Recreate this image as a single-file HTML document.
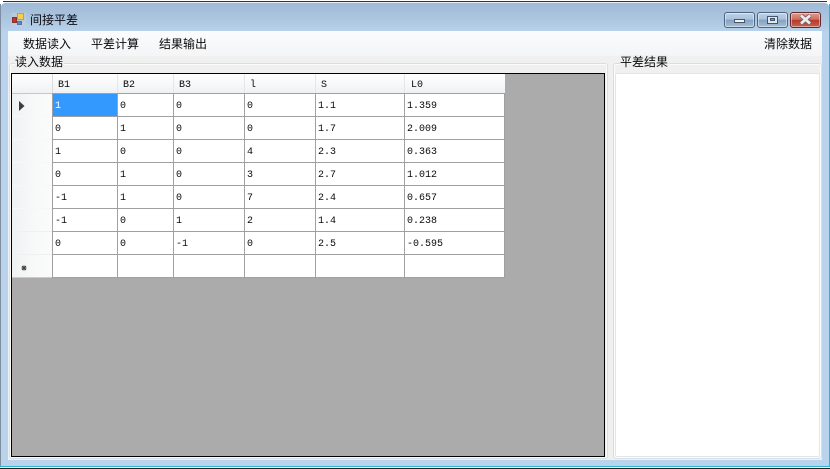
<!DOCTYPE html>
<html>
<head>
<meta charset="utf-8">
<style>
html,body{margin:0;padding:0;width:830px;height:469px;overflow:hidden;background:#fff}
*{box-sizing:border-box}
.a{position:absolute}
#win{position:absolute;left:1px;top:2px;width:828px;height:464px;background:linear-gradient(180deg,#9fbad7 0,#aec7e0 18px,#bad3ec 30px,#bad3ec 100%);border-radius:5px 5px 0 0;border-top:1px solid #e8eef4;}
.cjk{font-family:"Liberation Sans","WenQuanYi Zen Hei","Noto Sans CJK SC",sans-serif;font-size:12px;line-height:14px;color:#0a0a0a;white-space:nowrap}
.m{font-family:"Liberation Mono",monospace;font-size:10px;line-height:12px;color:#0a0a0a;white-space:pre}
.h{position:absolute;background:#a0a0a0}
.btn{position:absolute;top:12px;height:16px;width:31px;border:1px solid #4d6580;border-radius:3px;box-shadow:inset 0 0 0 1px rgba(255,255,255,.45)}
</style>
</head>
<body>
<div class="a" style="left:3px;top:1px;width:824px;height:1px;background:#2c3640"></div>
<div id="win"></div>
<div class="a" style="left:0;top:4px;width:1px;height:462px;background:#7f8f9f"></div>
<div class="a" style="left:829px;top:4px;width:1px;height:462px;background:#2ab8d0"></div>
<div class="a" style="left:0;top:466px;width:830px;height:1px;background:#2ab8d0"></div>
<div class="a" style="left:0;top:468px;width:830px;height:1px;background:#222"></div>

<!-- title icon -->
<svg class="a" style="left:11px;top:12px" width="16" height="16" viewBox="0 0 16 16">
<rect x="0.5" y="0.5" width="15" height="14" fill="#c3cfdb" fill-opacity=".55"/>
<rect x="1.5" y="5.5" width="4" height="5" fill="#c0322a" stroke="#8a3030"/>
<rect x="6.5" y="1.5" width="6" height="6" fill="#f5cf50" stroke="#c0a050"/>
<rect x="6.5" y="9.5" width="4" height="3" fill="#5a88d0" stroke="#5070b0"/>
</svg>
<div class="a cjk" style="left:30px;top:13px;color:#0c0c14">间接平差</div>

<!-- window buttons -->
<div class="btn" style="left:724px;background:linear-gradient(180deg,#bfd2e6 0,#a9c1da 45%,#84a2c2 50%,#a5bfd8 100%)"></div>
<div class="a" style="left:734px;top:19px;width:11px;height:4px;background:#eef2f6;border:1px solid #46566a"></div>
<div class="btn" style="left:757px;background:linear-gradient(180deg,#bfd2e6 0,#a9c1da 45%,#84a2c2 50%,#a5bfd8 100%)"></div>
<div class="a" style="left:767px;top:16px;width:11px;height:8px;background:#dfe7ef;border:1px solid #46566a"></div>
<div class="a" style="left:770px;top:18px;width:5px;height:3px;background:#7f9ab6;border:1px solid #46566a"></div>
<div class="btn" style="left:790px;border-color:#5c2a30;background:linear-gradient(180deg,#dd9a8c 0,#cf6f60 45%,#b53a2a 52%,#c9604e 100%)"></div>
<svg class="a" style="left:798px;top:13px" width="15" height="13" viewBox="0 0 15 13">
<path d="M3 2.5 L12 10.5 M12 2.5 L3 10.5" stroke="#7a5a60" stroke-width="4.4" fill="none"/>
<path d="M3 2.5 L12 10.5 M12 2.5 L3 10.5" stroke="#ececec" stroke-width="2.8" fill="none"/>
</svg>

<!-- client area -->
<div class="a" style="left:8px;top:31px;width:814px;height:429px;background:#f0f0f0"></div>
<div class="a" style="left:8px;top:31px;width:814px;height:25px;background:linear-gradient(180deg,#fbfcfd 0,#f4f5f6 100%)"></div>
<div class="a cjk" style="left:23px;top:37px">数据读入</div>
<div class="a cjk" style="left:91px;top:37px">平差计算</div>
<div class="a cjk" style="left:159px;top:37px">结果输出</div>
<div class="a cjk" style="left:764px;top:37px">清除数据</div>

<!-- group boxes -->
<div class="a" style="left:9px;top:63px;width:599px;height:396px;border:1px solid #d5dfe5;border-radius:3px;box-shadow:inset 0 0 0 1px #fbfcfc"></div>
<div class="a" style="left:613px;top:63px;width:209px;height:396px;border:1px solid #d5dfe5;border-radius:3px;box-shadow:inset 0 0 0 1px #fbfcfc"></div>
<div class="a cjk" style="left:15px;top:55px;background:#f0f0f0;padding-right:1px">读入数据</div>
<div class="a cjk" style="left:620px;top:55px;background:#f0f0f0;padding-right:1px">平差结果</div>

<!-- result textbox -->
<div class="a" style="left:615px;top:73px;width:205px;height:384px;background:#fff;border:1px solid #e2e6ea;border-radius:2px"></div>

<!-- grid -->
<div class="a" style="left:11px;top:73px;width:594px;height:384px;background:#ababab;border:1px solid #000"></div>
<div class="a" style="left:12px;top:74px;width:493px;height:20px;background:linear-gradient(180deg,#ffffff 0,#f7f8f9 50%,#eef0f2 100%)"></div>
<div class="a" style="left:12px;top:94px;width:40px;height:184px;background:linear-gradient(90deg,#f0f1f2,#f7f8f8 50%,#fbfbfc)"></div>
<div class="a" style="left:52px;top:94px;width:453px;height:184px;background:#fff"></div>
<div class="a" style="left:53px;top:94px;width:64px;height:22px;background:#3399ff"></div>

<!-- header column separators -->
<div class="a" style="left:52px;top:74px;width:1px;height:19px;background:#d8dce0"></div>
<div class="a" style="left:117px;top:74px;width:1px;height:19px;background:#e3e6ea"></div>
<div class="a" style="left:173px;top:74px;width:1px;height:19px;background:#e3e6ea"></div>
<div class="a" style="left:244px;top:74px;width:1px;height:19px;background:#e3e6ea"></div>
<div class="a" style="left:315px;top:74px;width:1px;height:19px;background:#e3e6ea"></div>
<div class="a" style="left:404px;top:74px;width:1px;height:19px;background:#e3e6ea"></div>

<!-- horizontal lines -->
<div class="h" style="left:52px;top:93px;width:453px;height:1px"></div>
<div class="h" style="left:52px;top:116px;width:453px;height:1px"></div>
<div class="h" style="left:52px;top:139px;width:453px;height:1px"></div>
<div class="h" style="left:52px;top:162px;width:453px;height:1px"></div>
<div class="h" style="left:52px;top:185px;width:453px;height:1px"></div>
<div class="h" style="left:52px;top:208px;width:453px;height:1px"></div>
<div class="h" style="left:52px;top:231px;width:453px;height:1px"></div>
<div class="h" style="left:52px;top:254px;width:453px;height:1px"></div>
<div class="h" style="left:52px;top:277px;width:453px;height:1px"></div>
<div class="a" style="left:12px;top:93px;width:40px;height:1px;background:#c4c8cc"></div>
<div class="a" style="left:12px;top:116px;width:40px;height:1px;background:#f6f7f8"></div>
<div class="a" style="left:12px;top:139px;width:40px;height:1px;background:#f6f7f8"></div>
<div class="a" style="left:12px;top:162px;width:40px;height:1px;background:#f6f7f8"></div>
<div class="a" style="left:12px;top:185px;width:40px;height:1px;background:#f6f7f8"></div>
<div class="a" style="left:12px;top:208px;width:40px;height:1px;background:#f6f7f8"></div>
<div class="a" style="left:12px;top:231px;width:40px;height:1px;background:#eef0f2"></div>
<div class="a" style="left:12px;top:254px;width:40px;height:1px;background:#eef0f2"></div>
<div class="a" style="left:12px;top:277px;width:40px;height:1px;background:#c8cbce"></div>

<!-- vertical lines -->
<div class="h" style="left:52px;top:93px;width:1px;height:185px"></div>
<div class="h" style="left:117px;top:93px;width:1px;height:185px"></div>
<div class="h" style="left:173px;top:93px;width:1px;height:185px"></div>
<div class="h" style="left:244px;top:93px;width:1px;height:185px"></div>
<div class="h" style="left:315px;top:93px;width:1px;height:185px"></div>
<div class="h" style="left:404px;top:93px;width:1px;height:185px"></div>
<div class="h" style="left:504px;top:93px;width:1px;height:185px"></div>

<!-- row header glyphs -->
<svg class="a" style="left:18px;top:100px" width="8" height="12" viewBox="0 0 8 12"><path d="M1 1 L6.5 6 L1 11 Z" fill="#3c3c3c"/></svg>
<svg class="a" style="left:21px;top:265px" width="6" height="6" viewBox="0 0 6 6"><path d="M1 1 L5 5 M5 1 L1 5 M3 0.5 V5.5 M0.5 3 H5.5" stroke="#444" stroke-width="1.1" fill="none"/></svg>

<!-- headers -->
<div class="a m" style="left:58px;top:80px">B1</div>
<div class="a m" style="left:123px;top:80px">B2</div>
<div class="a m" style="left:179px;top:80px">B3</div>
<div class="a m" style="left:250px;top:80px">l</div>
<div class="a m" style="left:321px;top:80px">S</div>
<div class="a m" style="left:411px;top:80px">L0</div>

<!-- row 1 -->
<div class="a m" style="left:55px;top:101px;color:#fff">1</div>
<div class="a m" style="left:120px;top:101px">0</div>
<div class="a m" style="left:176px;top:101px">0</div>
<div class="a m" style="left:247px;top:101px">0</div>
<div class="a m" style="left:318px;top:101px">1.1</div>
<div class="a m" style="left:407px;top:101px">1.359</div>
<!-- row 2 -->
<div class="a m" style="left:55px;top:124px">0</div>
<div class="a m" style="left:120px;top:124px">1</div>
<div class="a m" style="left:176px;top:124px">0</div>
<div class="a m" style="left:247px;top:124px">0</div>
<div class="a m" style="left:318px;top:124px">1.7</div>
<div class="a m" style="left:407px;top:124px">2.009</div>
<!-- row 3 -->
<div class="a m" style="left:55px;top:147px">1</div>
<div class="a m" style="left:120px;top:147px">0</div>
<div class="a m" style="left:176px;top:147px">0</div>
<div class="a m" style="left:247px;top:147px">4</div>
<div class="a m" style="left:318px;top:147px">2.3</div>
<div class="a m" style="left:407px;top:147px">0.363</div>
<!-- row 4 -->
<div class="a m" style="left:55px;top:170px">0</div>
<div class="a m" style="left:120px;top:170px">1</div>
<div class="a m" style="left:176px;top:170px">0</div>
<div class="a m" style="left:247px;top:170px">3</div>
<div class="a m" style="left:318px;top:170px">2.7</div>
<div class="a m" style="left:407px;top:170px">1.012</div>
<!-- row 5 -->
<div class="a m" style="left:55px;top:193px">-1</div>
<div class="a m" style="left:120px;top:193px">1</div>
<div class="a m" style="left:176px;top:193px">0</div>
<div class="a m" style="left:247px;top:193px">7</div>
<div class="a m" style="left:318px;top:193px">2.4</div>
<div class="a m" style="left:407px;top:193px">0.657</div>
<!-- row 6 -->
<div class="a m" style="left:55px;top:216px">-1</div>
<div class="a m" style="left:120px;top:216px">0</div>
<div class="a m" style="left:176px;top:216px">1</div>
<div class="a m" style="left:247px;top:216px">2</div>
<div class="a m" style="left:318px;top:216px">1.4</div>
<div class="a m" style="left:407px;top:216px">0.238</div>
<!-- row 7 -->
<div class="a m" style="left:55px;top:239px">0</div>
<div class="a m" style="left:120px;top:239px">0</div>
<div class="a m" style="left:176px;top:239px">-1</div>
<div class="a m" style="left:247px;top:239px">0</div>
<div class="a m" style="left:318px;top:239px">2.5</div>
<div class="a m" style="left:407px;top:239px">-0.595</div>
</body>
</html>
